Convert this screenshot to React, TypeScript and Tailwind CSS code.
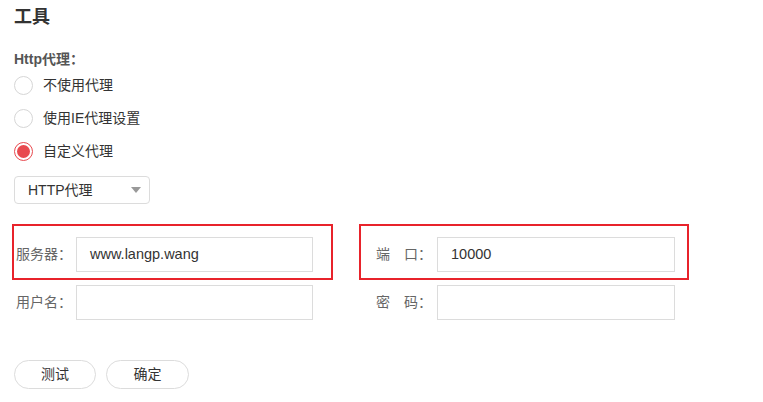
import React from "react";

const cjk = "font-['Liberation_Sans','Noto_Sans_CJK_SC',sans-serif]";

const Radio = ({ label, checked }: { label: string; checked?: boolean }) => (
    <label className="flex items-center h-[33px] gap-[10px]">
        {checked ? (
            <span className="w-[19px] h-[19px] rounded-full border border-[#e84a4f] flex items-center justify-center">
                <span className="w-[13px] h-[13px] rounded-full bg-[#e84a4f]" />
            </span>
        ) : (
            <span className="w-[19px] h-[19px] rounded-full border border-[#d6d6d6] bg-white" />
        )}
        <span className="text-[14px] text-[#333]">{label}</span>
    </label>
);

const Field = ({ label, value, wide }: { label: string; value?: string; wide?: boolean }) => (
    <div className="flex items-center">
        <span className={`${wide ? "w-[63px]" : "w-[62px]"} pl-[2px] text-[14px] text-[#666] whitespace-pre`}>{label}</span>
        <div className={`${wide ? "w-[238px]" : "w-[237px]"} h-[35px] border border-[#dcdcdc] flex items-center pl-[13px] text-[14.5px] text-[#333]`}>
            {value}
        </div>
    </div>
);

export default function App() {
    return (
        <div className={`w-[763px] h-[402px] bg-white pl-[14px] pt-[6px] ${cjk}`}>
            <h1 className="text-[18px] leading-[22px] font-bold text-[#333]">工具</h1>

            <p className="mt-[21px] text-[14px] leading-[20px] font-bold text-[#555]">Http代理：</p>

            <div className="flex flex-col">
                <Radio label="不使用代理" />
                <Radio label="使用IE代理设置" />
                <Radio label="自定义代理" checked />
            </div>

            <div className="mt-[8px] w-[136px] h-[28px] border border-[#dcdcdc] rounded-[4px] flex items-center justify-between pl-[13px] pr-[8px]">
                <span className="text-[14px] text-[#333]">HTTP代理</span>
                <svg width="10" height="6" viewBox="0 0 10 6">
                    <path d="M0 0 L10 0 L5 6 Z" fill="#999" />
                </svg>
            </div>

            <div className="relative mt-[33px] flex flex-col gap-[13px] w-[680px]">
                <div className="flex gap-[61px]">
                    <Field label="服务器：" value="www.langp.wang" />
                    <Field label="端　口：" value="10000" wide />
                </div>
                <div className="flex gap-[61px]">
                    <Field label="用户名：" />
                    <Field label="密　码：" wide />
                </div>
                {/* annotation boxes */}
                <div className="absolute left-[-2px] top-[-13px] w-[321px] h-[56px] border-2 border-[#e8232b]" />
                <div className="absolute left-[345px] top-[-13px] w-[330px] h-[56px] border-2 border-[#e8232b]" />
            </div>

            <div className="mt-[40px] flex gap-[10px]">
                <button className="w-[82px] h-[29px] rounded-full border border-[#dcdcdc] text-[14px] text-[#333]">测试</button>
                <button className="w-[83px] h-[29px] rounded-full border border-[#dcdcdc] text-[14px] text-[#333]">确定</button>
            </div>
        </div>
    );
}
